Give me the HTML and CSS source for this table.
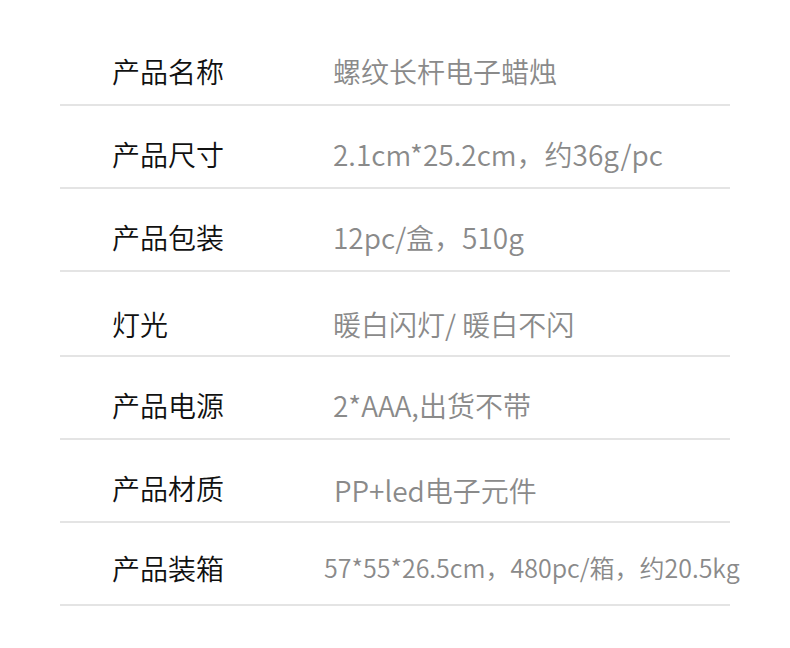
FILE: index.html
```html
<!DOCTYPE html>
<html lang="zh">
<head>
<meta charset="utf-8">
<link rel="stylesheet" href="styles.css">
</head>
<body>
<div class="spec">
  <div class="row"><div class="label">产品名称</div><div class="value">螺纹长杆电子蜡烛</div></div>
  <div class="row"><div class="label">产品尺寸</div><div class="value">2.1cm*25.2cm，约36g/pc</div></div>
  <div class="row"><div class="label">产品包装</div><div class="value">12pc/盒，510g</div></div>
  <div class="row row-tall"><div class="label">灯光</div><div class="value">暖白闪灯/ 暖白不闪</div></div>
  <div class="row"><div class="label">产品电源</div><div class="value">2*AAA,出货不带</div></div>
  <div class="row row-material"><div class="label">产品材质</div><div class="value value-shift">PP+led电子元件</div></div>
  <div class="row row-last"><div class="label">产品装箱</div><div class="value value-wide">57*55*26.5cm，480pc/箱，约20.5kg</div></div>
</div>
</body>
</html>
```
FILE: styles.css
```css
html, body {
  margin: 0;
  padding: 0;
  background: #ffffff;
}
body {
  font-family: "Noto Sans CJK SC", "Noto Sans", sans-serif;
  width: 790px;
  height: 648px;
  overflow: hidden;
}
.spec {
  margin-left: 60px;
  width: 670px;
  padding-top: 23px;
}
.row {
  height: 81px;
  border-bottom: 2px solid #e4e4e4;
  display: grid;
  grid-template-columns: 273px 1fr;
  align-items: center;
}
.label {
  padding-left: 52px;
  font-size: 28px;
  font-weight: 350;
  color: #111111;
  line-height: 1;
  margin-top: 15px;
}
.value {
  font-size: 28px;
  font-weight: 350;
  color: #8a8a8a;
  line-height: 1;
  margin-top: 15px;
  white-space: nowrap;
}
.row-tall {
  height: 83px;
}
.row-tall .label,
.row-tall .value {
  margin-top: 20px;
}
.row-material .label {
  margin-top: 15px;
}
.value-shift {
  margin-left: 1px;
}
.row-material .value-shift {
  margin-top: 19px;
}
.row-last .label {
  margin-top: 8px;
}
.row-last .value-wide {
  margin-left: -9px;
  font-size: 25px;
  margin-top: 8px;
}
```
